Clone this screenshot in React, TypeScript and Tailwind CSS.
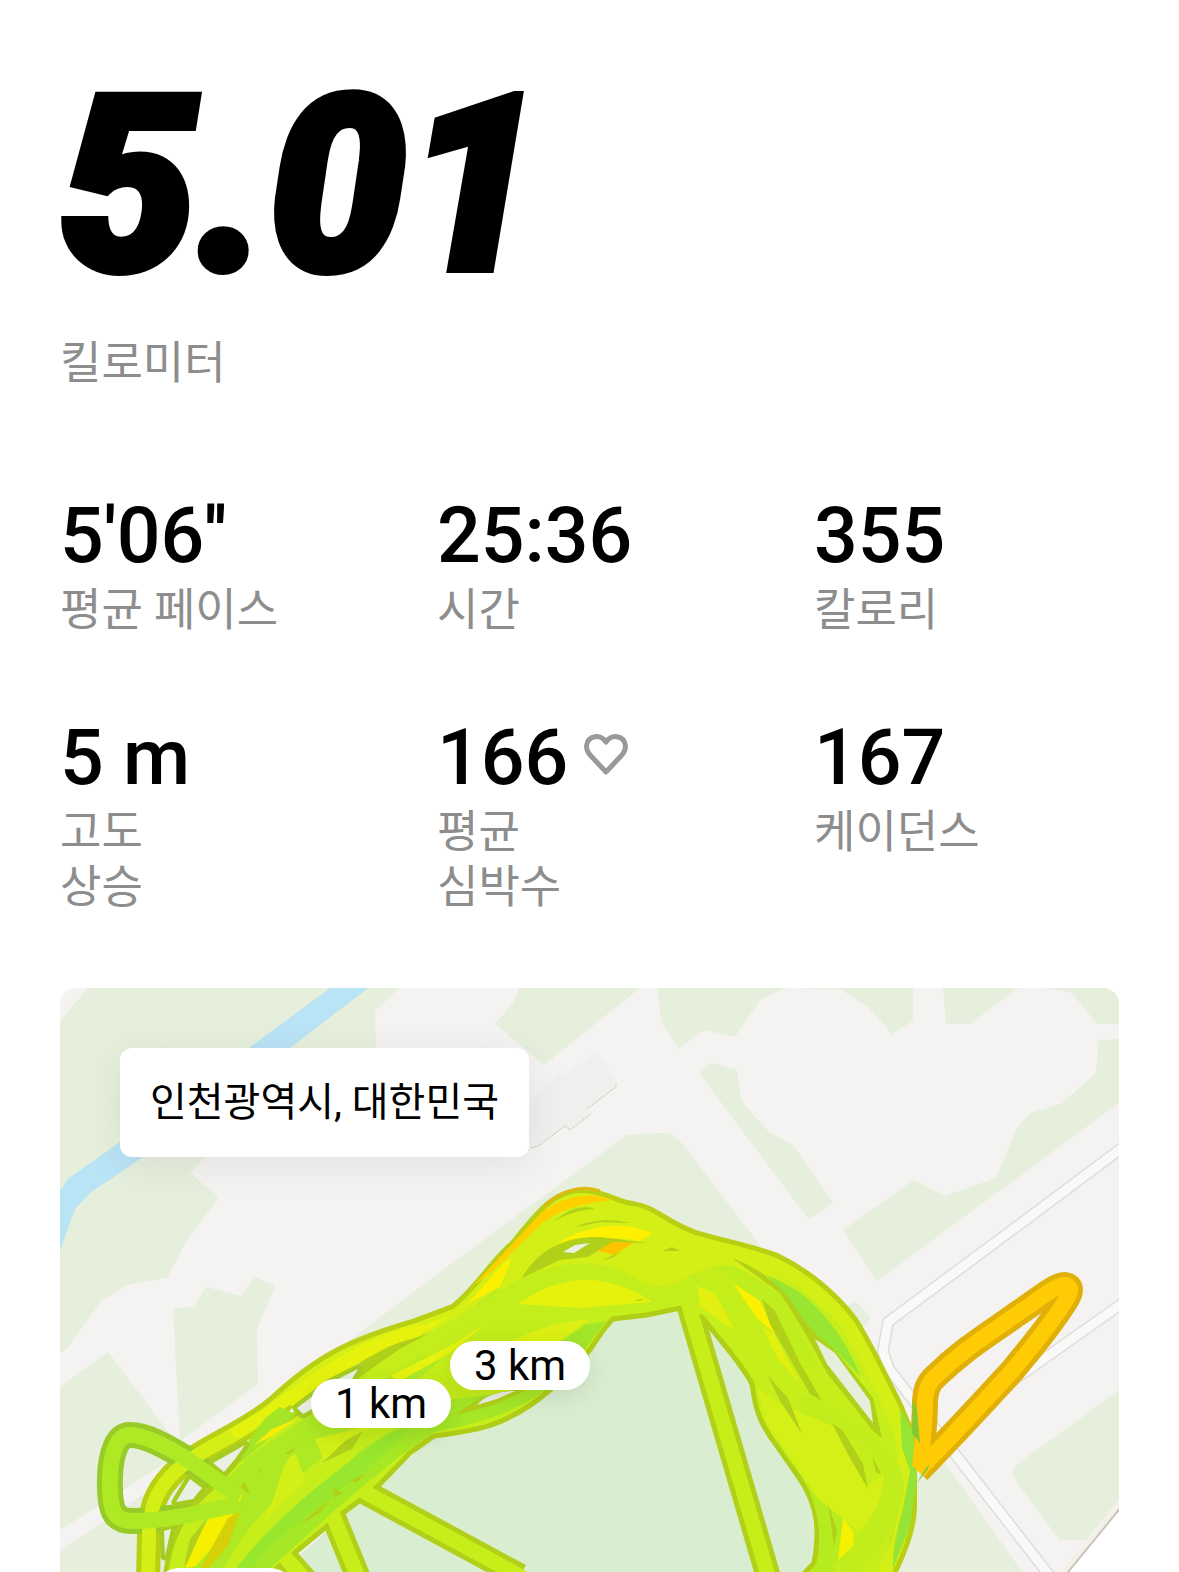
import React from 'react';

const stats = [
  { value: "5'06''", label: ['평균 페이스'] },
  { value: '25:36', label: ['시간'] },
  { value: '355', label: ['칼로리'] },
  { value: '5 m', label: ['고도', '상승'] },
  { value: '166', label: ['평균', '심박수'], heart: true },
  { value: '167', label: ['케이던스'] }
];

const parks = [
  'M60 1020 L88 987 H399 L375 1010 L376 1047 V1100 L206 1155 L190 1172 L219 1197 L188 1237 L167 1277 L130 1283 L102 1299 L67 1348 L60 1351 Z',
  'M519 987 L514 1001 L495 1023 L544 1064 L640 987 Z',
  'M657 987 L662 1022 L679 1048 L704 1029 L735 1036 L760 999 L785 987 Z',
  'M800 987 L842 989 L869 1007 L892 1033 L913 1020 V987 Z',
  'M943 987 L946 1023 H970 L1018 987 Z',
  'M1045 987 L1071 991 L1097 1023 H1119 V987 Z',
  'M1119 1038 L1099 1039 L1096 1072 L1061 1103 L1030 1112 L1017 1127 L996 1177 L945 1195 L914 1179 L843 1229 L877 1280 L1119 1102 Z',
  'M711 1062 L737 1069 L741 1100 L769 1131 L793 1144 L833 1201 L809 1219 L699 1072 Z',
  'M627 1134 L655 1132 H669 L680 1140 L780 1270 L700 1400 L300 1400 L342 1345 L440 1271 Z',
  'M840 1310 L855 1300 L871 1317 L855 1335 Z',
  'M820 1320 L885 1430 L840 1450 Z',
  'M1119 1389 L1015 1465 L1012 1474 L1059 1539 H1086 L1119 1499 Z',
  'M945 1462 L1023 1572 H890 L910 1470 Z',
  'M173 1307 L194 1306 L206 1286 L241 1295 L255 1276 L275 1285 L257 1328 L258 1383 L180 1440 Z',
  'M60 1386 L108 1351 L170 1433 L172 1458 L60 1529 Z',
  'M60 1550 L200 1455 L300 1572 H60 Z'
];

const outerLap =
  'M148 1580 L149 1535 C149 1500 162 1483 177 1469 C200 1448 245 1432 277 1405 C323 1362 355 1347 417 1329 L457 1314 C480 1298 500 1264 519 1249 C545 1216 560 1198 583 1199 C604 1200 614 1210 632 1212 C652 1215 662 1230 694 1241 C724 1250 750 1254 775 1264 C800 1276 828 1298 847 1323 C860 1342 880 1384 892 1408 L901 1430 C906 1455 905 1480 905 1505 C905 1525 896 1550 880 1580';

const leftLoop =
  'M240 1496 L190 1460 C165 1444 145 1434 130 1434 C117 1434 111 1452 110 1475 C109 1508 113 1520 132 1520 C165 1520 190 1514 240 1503';

const spokes = ['M350 1483 L520 1575', 'M327 1500 L358 1576', 'M284 1555 L306 1580', 'M689 1305 L769 1578'];

const sprint =
  'M920 1466 C923 1440 925 1420 925 1400 C926 1388 928 1382 936 1375 C965 1347 985 1336 1017 1313 C1040 1298 1055 1284 1065 1284 C1072 1285 1071 1291 1066 1299 C1050 1325 1030 1348 1013 1369 C980 1405 950 1437 918 1470';

const band =
  'M165 1580 C168 1545 178 1525 193 1505 L223 1476 L247 1449 C270 1425 300 1412 340 1385 L400 1345 L457 1314 C480 1298 500 1264 519 1249 C545 1216 560 1198 583 1199 C604 1200 614 1210 632 1212 C652 1215 662 1230 694 1241 C724 1250 750 1254 775 1264 C800 1276 828 1298 847 1323 C860 1342 880 1384 892 1408 L901 1430 C906 1455 905 1480 905 1505 C905 1525 896 1550 880 1580 H797 L814 1562 C820 1530 818 1505 800 1478 L777 1445 C756 1418 755 1402 752 1383 C740 1360 720 1340 703 1317 L680 1307 L647 1314 L613 1318 C595 1335 590 1360 550 1389 C505 1428 470 1430 434 1435 L410 1452 L375 1488 L343 1512 L297 1550 L262 1580 Z';

const shades = [
  // green flow
  { fill: '#a6e726', d: 'M240 1572 C270 1530 320 1490 360 1450 L440 1400 L550 1386 C520 1410 480 1422 434 1431 L400 1455 L345 1500 L265 1572 Z' },
  { fill: '#98e62e', d: 'M233 1572 C270 1520 335 1470 385 1435 L410 1425 C380 1465 320 1500 265 1550 L250 1572 Z' },
  { fill: '#aee924', d: 'M190 1572 C200 1540 210 1515 232 1494 L222 1482 L250 1455 L300 1420 L400 1370 L440 1360 L330 1450 C280 1490 240 1530 222 1572 Z' },
  { fill: '#b9eb20', d: 'M400 1370 L480 1300 L560 1250 L600 1262 L560 1300 L440 1360 Z' },
  { fill: '#a4e626', d: 'M265 1417 L280 1406 L296 1413 L260 1445 L240 1462 L247 1442 Z' },
  { fill: '#a2e62a', d: 'M545 1352 L585 1324 L606 1320 L582 1352 Z' },
  { fill: '#c3ee1b', d: 'M400 1350 L500 1290 L540 1240 L600 1255 L680 1262 L740 1310 L680 1302 L610 1312 L560 1330 L450 1360 Z' },
  { fill: '#b9ec22', d: 'M645 1270 C660 1255 680 1255 688 1262 L705 1290 C690 1268 672 1262 656 1280 Z' },
  { fill: '#bfed1e', d: 'M705 1255 C740 1262 770 1280 785 1300 L820 1370 L790 1350 L735 1280 Z' },
  { fill: '#b6eb20', d: 'M762 1424 C790 1460 815 1490 845 1515 L835 1580 H805 L818 1560 C822 1530 818 1505 802 1476 Z' },
  // faster, yellow parts
  { fill: '#d4ef16', d: 'M505 1275 C520 1240 560 1208 600 1203 C650 1207 690 1240 740 1254 C800 1280 850 1330 880 1420 L872 1396 C840 1340 800 1300 740 1268 C700 1250 680 1300 640 1280 C600 1250 540 1262 500 1290 Z' },
  { fill: '#fdf000', d: 'M545 1255 C570 1225 620 1218 652 1232 L640 1240 C610 1234 575 1236 545 1255 Z' },
  { fill: '#ffd000', d: 'M473 1285 L500 1256 L540 1213 C560 1196 590 1190 612 1199 C588 1202 562 1206 540 1224 L493 1270 Z' },
  { fill: '#fdf000', d: 'M464 1304 C480 1294 492 1270 512 1256 L500 1286 Z' },
  { fill: '#e6f20e', d: 'M518 1303 C550 1280 580 1276 600 1280 C625 1284 645 1295 652 1301 L580 1307 Z' },
  { fill: '#dcf014', d: 'M500 1345 C530 1330 560 1320 590 1318 L545 1350 Z' },
  { fill: '#e8f20c', d: 'M290 1404 C340 1360 390 1335 450 1315 L430 1328 C380 1346 340 1372 295 1406 Z' },
  { fill: '#e6f20e', d: 'M390 1375 L450 1345 L487 1322 L450 1352 L400 1380 Z' },
  { fill: '#f8ee04', d: 'M254 1444 L272 1428 L297 1418 L270 1436 Z' },
  { fill: '#d2f018', d: 'M258 1527 C280 1500 278 1460 295 1452 L306 1480 L275 1510 Z' },
  { fill: '#d2f018', d: 'M315 1438 L372 1424 L325 1462 Z' },
  { fill: '#f6f000', d: 'M186 1566 C196 1540 206 1510 240 1492 L246 1484 L238 1505 L218 1540 L195 1566 Z' },
  { fill: '#d6d008', d: 'M201 1566 L228 1517 L240 1511 L228 1545 L208 1568 Z' },
  { fill: '#d4f016', d: 'M757 1387 C775 1400 790 1408 800 1410 C820 1412 838 1420 845 1432 L867 1485 L883 1473 C886 1490 878 1512 858 1530 L817 1497 L767 1423 Z' },
  { fill: '#c2ed1d', d: 'M800 1395 C830 1400 850 1420 868 1432 C900 1455 908 1475 902 1500 C890 1540 870 1560 850 1575 L830 1565 C860 1545 880 1510 885 1475 C880 1450 850 1430 800 1412 Z' },
  { fill: '#f4f200', d: 'M843 1517 L854 1532 L853 1545 L838 1559 Z' },
  { fill: '#fdf000', d: 'M733 1282 L760 1300 L775 1333 L757 1317 Z' },
  { fill: '#e2f010', d: 'M697 1285 L715 1292 L735 1330 L700 1305 Z' },
  { fill: '#e2f010', d: 'M762 1326 L775 1334 L800 1383 L778 1358 Z' },
  { fill: '#ffc400', d: 'M590 1248 L612 1237 L635 1241 L614 1254 Z' },
  // slow green patches
  { fill: '#98e632', d: 'M767 1274 C785 1282 800 1290 812 1302 C833 1322 850 1348 861 1376 L833 1347 L808 1330 L790 1300 Z' },
  { fill: '#96e436', d: 'M900 1408 L913 1430 L917 1475 L910 1525 L893 1568 C892 1550 898 1525 903 1507 L910 1470 L902 1447 Z' }
];

// slits between laps where the darker line edge shows
const seams = [
  'M522 1277 C540 1245 570 1235 600 1236 L648 1242 L612 1241 L588 1256 L560 1259 Z',
  'M555 1220 C570 1207 585 1204 595 1208 C580 1208 565 1214 555 1220 Z',
  'M572 1227 C595 1217 615 1218 630 1222 L600 1221 Z',
  'M732 1257 C752 1264 775 1278 790 1299 C805 1322 815 1334 833 1347 C850 1368 862 1382 873 1397 L882 1437 L873 1430 L827 1372 C815 1350 805 1330 780 1292 Z',
  'M762 1298 L775 1310 L800 1362 L822 1400 L810 1393 L770 1323 Z',
  'M768 1375 L788 1397 L802 1433 L780 1400 Z',
  'M832 1422 L843 1430 L863 1463 L868 1488 L850 1457 Z',
  'M872 1454 L881 1473 L876 1471 Z',
  'M828 1502 L837 1530 L834 1545 Z',
  'M888 1548 L896 1520 L891 1540 Z',
  'M603 1259 L622 1250 L612 1257 Z',
  'M663 1250 L680 1250 L672 1246 Z',
  'M634 1300 L645 1297 L640 1300 Z',
  'M322 1462 L345 1440 L363 1430 L352 1448 Z',
  'M300 1523 L330 1498 L320 1512 Z',
  'M332 1486 L343 1492 L334 1496 Z',
  'M350 1480 L365 1472 L357 1481 Z',
  'M284 1453 L298 1445 L290 1453 Z',
  'M240 1488 L244 1480 L250 1493 Z',
  'M258 1476 L261 1466 L259 1468 Z',
  'M456 1414 C475 1395 505 1388 530 1388 L490 1405 Z',
  'M345 1372 C370 1354 390 1346 405 1342 L385 1358 L355 1380 Z',
  'M208 1516 L190 1538 L184 1566 L188 1560 Z'
];

const routeHoles = [
  'M297 1407 L330 1382 L358 1368 L345 1390 L303 1413 Z',
  'M213 1462 L245 1444 L235 1458 L224 1471 Z',
  'M176 1501 L190 1478 L202 1487 L193 1498 Z',
  'M164 1530 L171 1528 L165 1555 Z'
];

const RunMap = () => (
  <svg
    className="absolute inset-0 h-full w-full"
    viewBox="60 987 1059 585"
    preserveAspectRatio="xMinYMin slice"
    aria-hidden="true"
  >
    <rect x="60" y="987" width="1059" height="900" fill="#f4f3f1" />
    {parks.map((d, index) => (
      <path key={index} d={d} fill="#e6eedc" />
    ))}
    <path d="M330 987 H368 L290 1047 L143 1156 L90 1192 L75 1208 L60 1250 V1190 L68 1178 L120 1141 L249 1047 Z" fill="#b9e4f5" />
    <path d="M520 1108 L560 1070 L566 1074 L597 1051 L616 1080 L616 1086 L587 1108 L591 1113 L570 1129 L565 1125 L538 1145 L520 1150 Z" fill="#efefee" />
    <path d="M531 1147 L538 1145 L565 1125 L570 1129 L591 1113 M587 1108 L616 1086 V1082" fill="none" stroke="#c0c2ba" strokeDasharray="2 1" />

    <g fill="none" strokeLinejoin="round">
      <path d="M1130 1141 L1008 1232 L888 1321 L883 1350 L889 1368 L1056 1583 M1130 1297 L960 1417" stroke="#dedddb" strokeWidth="12" />
      <path d="M1130 1141 L1008 1232 L888 1321 L883 1350 L889 1368 L1056 1583 M1130 1297 L960 1417" stroke="#f9f9f8" strokeWidth="9" />
    </g>
    <path d="M1119 1508 L1067 1572 H1119 Z" fill="#fff" />
    <path d="M1119 1504 L1063 1572" stroke="#f4f0e6" strokeWidth="4" />
    <path d="M1122 1505 L1064 1576" stroke="#c9c3bd" strokeWidth="2" />

    <path d="M680 1300 L613 1315 L550 1385 L440 1430 L270 1580 H850 L850 1500 L800 1420 L740 1330 Z" fill="#d9eed1" />

    <g fill="none" strokeLinejoin="round">
      <path d={sprint} stroke="#e0b008" strokeWidth="26" />
      <path d={outerLap} stroke="#b8cf14" strokeWidth="24" />
      <path d={leftLoop} stroke="#98ca28" strokeWidth="26" />
      {spokes.map((d) => (
        <path key={d} d={d} stroke="#b2d01a" strokeWidth="25" />
      ))}
    </g>
    <path d={band} fill="#c5ee1b" stroke="#b0ce18" strokeWidth="5" />
    <g fill="none" strokeLinejoin="round" strokeLinecap="round">
      {spokes.map((d) => (
        <path key={d} d={d} stroke="#c8ee1a" strokeWidth="15" />
      ))}
      <path d={outerLap} stroke="#d4ef16" strokeWidth="14" />
      <path d="M237 1431 C300 1396 330 1355 417 1329" stroke="#e4f20e" strokeWidth="12" />
    </g>
    {shades.map((shade, index) => (
      <path key={index} d={shade.d} fill={shade.fill} />
    ))}
    {seams.map((d, index) => (
      <path key={index} d={d} fill="#b0d01a" />
    ))}
    {routeHoles.map((d, index) => (
      <path key={index} d={d} fill="#eaf0e4" stroke="#a6cc22" strokeWidth="9" strokeLinejoin="round" paintOrder="stroke" />
    ))}
    <path d="M563 1251 L575 1244 L590 1242 L574 1252 Z M477 1404 C485 1394 500 1390 515 1390 L497 1398 Z" fill="#eaf0e4" />
    <path d="M815 1338 L835 1352 L870 1400 L873 1422 L827 1363 Z" fill="#e6eedc" />
    <path d={leftLoop} fill="none" stroke="#aee924" strokeWidth="16" />
    <path d="M545 1205 C562 1188 583 1184 600 1190" fill="none" stroke="#e0b810" strokeWidth="3" />
    <path d={sprint} fill="none" stroke="#ffcb05" strokeWidth="16" strokeLinejoin="round" />
    <path d="M913 1398 L917 1408 L920 1442 L912 1432 Z" fill="#84c834" />
    <path d="M922 1473 L929 1463 L928 1468 L917 1482 Z" fill="#84c834" />
  </svg>
);

const HeartIcon = () => (
  <svg className="mb-2 h-11 w-11" viewBox="0 0 44 44" fill="none" aria-hidden="true">
    <path
      d="M22 10 C16.500 2 4 2.500 2.500 14 C2.500 18 4 21 7 24 L22 40 L37 24 C40 21 41.500 18 41.500 14 C40 2.500 27.500 2 22 10 Z"
      stroke="#999999"
      strokeWidth="5"
      strokeLinejoin="round"
    />
  </svg>
);

const App = () => {
  return (
    <main className="flex min-h-screen flex-col bg-white px-[60px] pt-[76px] font-['Roboto','Noto_Sans_CJK_KR',sans-serif] text-black">
      <header>
        <h1 className="text-[244px] leading-[220px] font-black italic [-webkit-text-stroke:8px_#000]">5.01</h1>
        <p className="mt-10 text-[45px] leading-[55px] text-[#8d8d8d]">킬로미터</p>
      </header>

      <dl className="mt-[98px] grid grid-cols-3 gap-x-18 gap-y-[73px]">
        {stats.map((stat, index) => (
          <div key={index} className="flex flex-col-reverse justify-end">
            <dt className="text-[45px] leading-[55px] text-[#8d8d8d]">
              {stat.label.map((line) => (
                <span key={line} className="block">{line}</span>
              ))}
            </dt>
            <dd className="flex items-center gap-4 text-[77px] leading-[94px] font-medium">
              {stat.value}
              {stat.heart && <HeartIcon />}
            </dd>
          </div>
        ))}
      </dl>

      <section aria-label="러닝 경로" className="relative mt-[73px] flex-1 overflow-hidden rounded-t-2xl p-[60px]">
        <RunMap />
        <p className="relative w-fit rounded-xl bg-white px-[30px] py-[27px] text-[40px] leading-[55px] shadow-[0_8px_40px_rgba(0,0,0,0.07)]">
          인천광역시, 대한민국
        </p>
        <span className="absolute top-[391px] left-[251px] rounded-full bg-white px-6 text-[42px] leading-[49px] shadow-[0_6px_24px_rgba(0,0,0,0.1)]">1 km</span>
        <span className="absolute top-[353px] left-[390px] rounded-full bg-white px-6 text-[42px] leading-[49px] shadow-[0_6px_24px_rgba(0,0,0,0.1)]">3 km</span>
        <span className="absolute top-[580px] left-[95px] h-12 w-[139px] rounded-full bg-white" />
      </section>
    </main>
  );
};

export default App;
